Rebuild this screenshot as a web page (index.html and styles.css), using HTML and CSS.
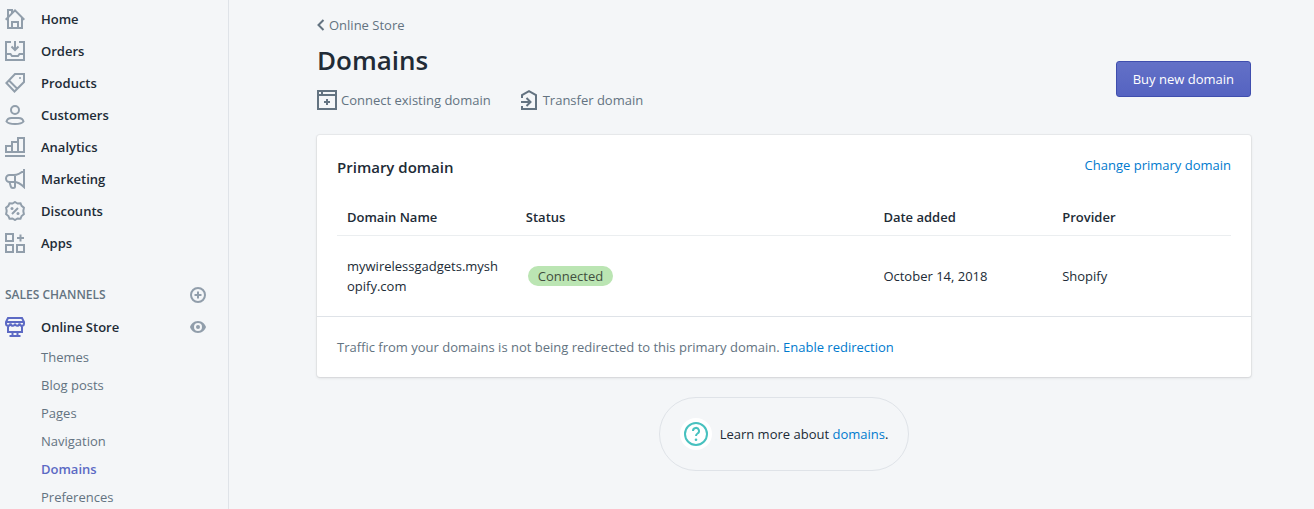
FILE: index.html
```
<!DOCTYPE html>
<html lang="en">
<head>
    <meta charset="UTF-8">
    <meta name="viewport" content="width=device-width, initial-scale=1.0">
    <title>Domains</title>
    <link rel="stylesheet" href="styles.css">
</head>
<body>
    <div class="app">
        <aside class="sidebar">
            <nav class="nav">
                <a class="nav-item" href="#">
                    <svg class="icon" viewBox="0 0 20 20"><path d="M.7 10.700L10 1.400l9.300 9.300M3 9v10h14V9M7 19v-6h6v6M3 8.500V1h4v3"/></svg>
                    Home
                </a>
                <a class="nav-item" href="#">
                    <svg class="icon" viewBox="0 0 20 20"><path d="M6 1H1v18h18V1h-5M1 13h4.500l1.500 2h6l1.500-2H19M10 0v9M6.500 5.500L10 9l3.500-3.500"/></svg>
                    Orders
                </a>
                <a class="nav-item" href="#">
                    <svg class="icon" viewBox="0 0 20 20"><path d="M10 1h9v8l-9.500 9.500L1.400 10zM4 7.500l8.500 8.500"/><circle class="fill" cx="15" cy="5" r="1"/></svg>
                    Products
                </a>
                <a class="nav-item" href="#">
                    <svg class="icon" viewBox="0 0 20 20"><circle cx="10" cy="5" r="4"/><path d="M6.500 13h7c3 0 4.500 1.500 5 3.500-1.500 2-5 2.500-8.500 2.500s-7-.5-8.500-2.500c.5-2 2-3.500 5-3.500z"/></svg>
                    Customers
                </a>
                <a class="nav-item" href="#">
                    <svg class="icon" viewBox="0 0 20 20"><path d="M1 15V9h6v6zM7 15V5h6v10M13 5V1h6v14H7M0 19h20"/></svg>
                    Analytics
                </a>
                <a class="nav-item" href="#">
                    <svg class="icon" viewBox="0 0 20 20"><path d="M19 0v18c-3-3-6-5-10-5H4.500a3.500 3.500 0 0 1 0-7H9c4 0 7-2 10-4.500M10 6v11.500c0 1-.8 1.500-2 1.500s-2-.5-2.200-1.500L4.500 13"/></svg>
                    Marketing
                </a>
                <a class="nav-item" href="#">
                    <svg class="icon" viewBox="0 0 20 20"><path d="M10 1l2.500 1.500 3-.3 1.100 2.700 2.300 1.800-.6 3.300.6 3.200-2.300 1.800-1.100 2.800-3-.3L10 19l-2.500-1.500-3 .3-1.100-2.800-2.300-1.800.6-3.200-.6-3.300 2.300-1.800 1.100-2.700 3 .3zM7 13l6-6"/><circle class="fill" cx="7" cy="7.500" r="1.500"/><circle class="fill" cx="13" cy="12.500" r="1.500"/></svg>
                    Discounts
                </a>
                <a class="nav-item" href="#">
                    <svg class="icon" viewBox="0 0 20 20"><path d="M1 1h7v7H1zM1 12h7v7H1zM12 12h7v7h-7zM15.500 1.500v7M12 5h7"/></svg>
                    Apps
                </a>
            </nav>

            <div class="channels">
                <h2 class="channels-title">SALES CHANNELS</h2>
                <button class="icon-btn" aria-label="Add sales channel">
                    <svg class="icon small" viewBox="0 0 16 16"><circle cx="8" cy="8" r="7"/><path d="M8 4.500v7M4.500 8h7"/></svg>
                </button>
            </div>
            <div class="channel">
                <a class="nav-item active" href="#">
                    <svg class="icon" viewBox="0 0 20 20"><path d="M3 1h14l2 4v1.500c0 3-4 3-4.500 0-.5 3-4.200 3-4.500 0-.3 3-4 3-4.500 0-.5 3-4.500 3-4.500 0V5zM1 5h18M3 9v6h14V9M7.500 15v4M12.500 15v4M4.500 19h11"/></svg>
                    Online Store
                </a>
                <button class="icon-btn" aria-label="View your online store">
                    <svg class="icon small" viewBox="0 0 16 16"><path class="fill" fill-rule="evenodd" d="M8 2C3.500 2 .8 5.500 0 8c.8 2.500 3.500 6 8 6s7.200-3.500 8-6c-.8-2.500-3.500-6-8-6zm0 2a4 4 0 1 1 0 8 4 4 0 0 1 0-8z"/><circle class="fill" cx="8" cy="8" r="2"/></svg>
                </button>
            </div>
            <nav class="sub-nav">
                <a href="#">Themes</a>
                <a href="#">Blog posts</a>
                <a href="#">Pages</a>
                <a href="#">Navigation</a>
                <a class="selected" href="#">Domains</a>
                <a href="#">Preferences</a>
            </nav>
        </aside>

        <main class="main">
            <header class="page-header">
                <div>
                    <a class="breadcrumb" href="#">
                        <svg class="chevron" viewBox="0 0 8 12"><path d="M6.500 1L1.500 6l5 5"/></svg>
                        Online Store
                    </a>
                    <h1>Domains</h1>
                    <div class="actions">
                        <a class="action" href="#">
                            <svg class="icon" viewBox="0 0 20 20"><path d="M1 1h18v18H1zM1 5h18M5 1v4M10 9v6M7 12h6"/></svg>
                            Connect existing domain
                        </a>
                        <a class="action" href="#">
                            <svg class="icon" viewBox="0 0 20 20"><path d="M3 8V5l7-3.800L17 5v14H3v-3M2 12h9M7.500 8l4 4-4 4"/></svg>
                            Transfer domain
                        </a>
                    </div>
                </div>
                <button class="btn">Buy new domain</button>
            </header>

            <section class="card">
                <div class="card-header">
                    <h2>Primary domain</h2>
                    <a href="#">Change primary domain</a>
                </div>
                <div class="card-body">
                    <table class="domains">
                        <thead>
                            <tr>
                                <th class="col-name">Domain Name</th>
                                <th class="col-status">Status</th>
                                <th class="col-date">Date added</th>
                                <th class="col-provider">Provider</th>
                            </tr>
                        </thead>
                        <tbody>
                            <tr>
                                <td class="domain">mywirelessgadgets.myshopify.com</td>
                                <td><span class="badge">Connected</span></td>
                                <td>October 14, 2018</td>
                                <td>Shopify</td>
                            </tr>
                        </tbody>
                    </table>
                </div>
                <p class="card-footer">Traffic from your domains is not being redirected to this primary domain. <a href="#">Enable redirection</a></p>
            </section>

            <div class="help">
                <span class="help-icon">
                    <svg viewBox="0 0 24 24"><circle cx="12" cy="12" r="11"/><path d="M9 9a3 3 0 1 1 4.500 2.500c-1 .6-1.500 1-1.500 2.500"/><circle class="dot" cx="12" cy="17.800" r="1.300"/></svg>
                </span>
                <p>Learn more about <a href="#">domains</a>.</p>
            </div>
        </main>
    </div>
</body>
</html>
```
FILE: styles.css
```
*{
    margin: 0;
    padding: 0;
    box-sizing: border-box;
}

body{
    background-color: #f4f6f8;
    color: #212b36;
    font-family: "Open Sans", "Noto Sans", sans-serif;
    font-size: 13px;
    line-height: 20px;
}

a{
    color: #007ace;
    text-decoration: none;
}

button{
    font: inherit;
    cursor: pointer;
}

.app{
    display: flex;
    height: 100vh;
    overflow: hidden;
}

/* sidebar */

.sidebar{
    flex: none;
    width: 229px;
    padding-top: 3px;
    border-right: 1px solid #dfe3e8;
}

.nav-item{
    display: flex;
    align-items: center;
    gap: 16px;
    height: 32px;
    padding-left: 5px;
    color: #212b36;
    font-weight: 600;
}

.icon{
    flex: none;
    width: 20px;
    height: 20px;
    fill: none;
    stroke: #919eab;
    stroke-width: 2;
}

.icon.small{
    display: block;
    width: 16px;
    height: 16px;
}

.icon .fill{
    fill: #919eab;
    stroke: none;
}

.nav-item.active .icon{
    stroke: #5c6ac4;
}

.channels, .channel{
    display: flex;
    align-items: center;
    justify-content: space-between;
    height: 32px;
    padding-right: 22px;
}

.channels{
    margin-top: 20px;
    padding-left: 5px;
}

.channels-title{
    color: #637381;
    font-size: 12px;
    font-weight: 600;
}

.icon-btn{
    background: none;
    border: none;
}

.sub-nav a{
    display: block;
    padding: 4px 0 4px 41px;
    color: #637381;
}

.sub-nav a.selected{
    color: #5c6ac4;
    font-weight: 600;
}

/* page */

.main{
    flex: 1;
    padding: 15px 63px 0 88px;
}

.page-header{
    display: flex;
    align-items: center;
    justify-content: space-between;
    margin-bottom: 25px;
}

.breadcrumb{
    display: flex;
    align-items: center;
    gap: 4px;
    color: #637381;
}

.chevron{
    width: 8px;
    height: 12px;
    fill: none;
    stroke: #637381;
    stroke-width: 2;
}

h1{
    margin: 9px 0 14px;
    font-size: 26px;
    font-weight: 600;
    line-height: 32px;
}

.actions{
    display: flex;
    gap: 28px;
}

.action{
    display: flex;
    align-items: center;
    gap: 4px;
    color: #637381;
}

.action .icon{
    stroke: #637381;
}

.btn{
    height: 36px;
    margin-top: 33px;
    padding: 0 16px;
    background: linear-gradient(to bottom, #6371c7, #5563c1);
    border: 1px solid #3f4eae;
    border-radius: 3px;
    color: white;
    font-weight: 500;
}

.card{
    background-color: white;
    border-radius: 3px;
    box-shadow: 0 0 0 1px rgba(63, 63, 68, 0.05), 0 1px 3px 0 rgba(63, 63, 68, 0.15);
}

.card-header{
    display: flex;
    justify-content: space-between;
    padding: 20px 20px 0;
}

.card-header h2{
    font-size: 15px;
    font-weight: 600;
    line-height: 24px;
}

.card-body{
    padding: 20px 20px 0;
}

.domains{
    width: 100%;
    border-collapse: collapse;
    table-layout: fixed;
}

.domains th{
    padding: 8px 10px;
    border-bottom: 1px solid #ebeef0;
    font-weight: 600;
    text-align: left;
}

.domains td{
    padding: 20px 10px;
}

.domains .domain{
    word-break: break-all;
}

.col-name, .col-date{
    width: 20%;
}

.col-status{
    width: 40%;
}

.badge{
    display: inline-block;
    padding: 0 10px;
    background-color: #bbe5b3;
    border: 2px solid white;
    border-radius: 20px;
    color: #414f3e;
}

.card-footer{
    padding: 20px;
    border-top: 1px solid #dfe3e8;
    color: #637381;
}

.help{
    display: flex;
    align-items: center;
    gap: 8px;
    width: fit-content;
    margin: 20px auto;
    padding: 20px;
    border: 1px solid #dfe3e8;
    border-radius: 37px;
}

.help-icon{
    padding: 4px;
    background-color: white;
    border-radius: 50%;
}

.help-icon svg{
    display: block;
    width: 24px;
    height: 24px;
    fill: none;
    stroke: #47c1bf;
    stroke-width: 2;
}

.help-icon .dot{
    fill: #47c1bf;
    stroke: none;
}
```
